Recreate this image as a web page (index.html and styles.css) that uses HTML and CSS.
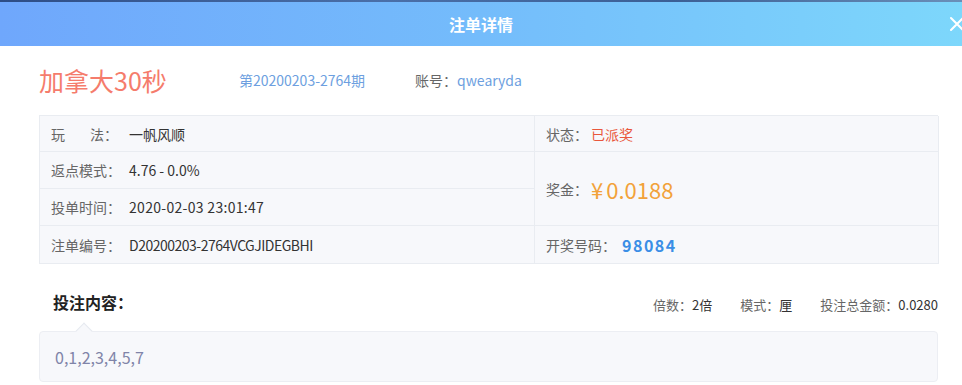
FILE: index.html
```html
<!DOCTYPE html>
<html lang="zh">
<head>
<meta charset="utf-8">
<link rel="stylesheet" href="styles.css">
</head>
<body>
<div class="modal">
  <div class="topstrip"></div>
  <header class="head">
    <span class="head-title">注单详情</span>
    <span class="close">
      <svg width="16" height="16" viewBox="0 0 16 16"><path d="M2 2 L14 14 M14 2 L2 14" stroke="#fff" stroke-width="2" fill="none" stroke-linecap="round"/></svg>
    </span>
  </header>
  <main class="body">
    <div class="title-row">
      <span class="game">加拿大30秒</span>
      <span class="issue">第20200203-2764期</span>
      <span class="acct"><span class="lbl">账号：</span><span class="acct-v">qwearyda</span></span>
    </div>
    <div class="table">
      <div class="cell c1"><span class="lbl k-wide">玩<span class="gap"></span>法：</span><span class="val">一帆风顺</span></div>
      <div class="cell c2"><span class="lbl">状态：</span><span class="status">已派奖</span></div>
      <div class="cell c3"><span class="lbl">返点模式：</span><span class="val">4.76 - 0.0%</span></div>
      <div class="cell c4"><span class="lbl">奖金：</span><span class="prize"><span class="yen">¥</span>0.0188</span></div>
      <div class="cell c5"><span class="lbl">投单时间：</span><span class="val">2020-02-03 23:01:47</span></div>
      <div class="cell c6"><span class="lbl">注单编号：</span><span class="val">D20200203-2764VCGJIDEGBHI</span></div>
      <div class="cell c7"><span class="lbl">开奖号码：</span><span class="nums">98084</span></div>
    </div>
    <div class="sec-row">
      <span class="sec-title">投注内容：</span>
      <div class="meta">
        <span><span class="lbl">倍数：</span><span class="val">2倍</span></span>
        <span><span class="lbl">模式：</span><span class="val">厘</span></span>
        <span><span class="lbl">投注总金额：</span><span class="val">0.0280</span></span>
      </div>
    </div>
    <div class="content">
      <span class="arrow"></span>
      0,1,2,3,4,5,7
    </div>
  </main>
</div>
</body>
</html>
```

FILE: styles.css
```css
* { box-sizing: border-box; }
html, body { margin: 0; padding: 0; background: #fff; }
body {
  width: 962px;
  height: 385px;
  overflow: hidden;
  font-family: "Noto Sans CJK SC", "Noto Sans", sans-serif;
  color: #333;
}
.modal { width: 962px; }
.topstrip {
  height: 2px;
  background: linear-gradient(90deg, #2d4d86 0%, #4a6fa8 40%, #3b5f95 70%, #6a8fb8 100%);
}
.head {
  height: 44px;
  background: linear-gradient(90deg, #6fa7fc 0%, #74bcfb 50%, #7dd7fb 100%);
  display: flex;
  align-items: center;
  justify-content: center;
  position: relative;
}
.head-title {
  color: #fff;
  font-size: 16px;
  font-weight: bold;
}
.close {
  position: absolute;
  right: -3px;
  top: 14px;
  width: 16px;
  height: 16px;
  display: block;
}
.close svg { display: block; }
.body { padding: 0 24px 0 39px; }
.title-row {
  height: 69px;
  display: flex;
  align-items: center;
  padding-bottom: 2px;
}
.game {
  font-size: 25px;
  color: #f57c6c;
  width: 200px;
}
.issue {
  font-size: 14px;
  color: #6d9fe0;
  width: 176px;
}
.acct { font-size: 14px; }
.lbl { color: #666; }
.acct-v { color: #6d9fe0; }
.table {
  display: grid;
  grid-template-columns: 495px 404px;
  grid-template-rows: 36px 37px 37px 38px;
  border-top: 1px solid #e9ecf1;
  border-left: 1px solid #e9ecf1;
  background: #f7f8fb;
  font-size: 14px;
}
.cell {
  display: flex;
  align-items: center;
  padding-left: 11px;
  border-right: 1px solid #e9ecf1;
  border-bottom: 1px solid #e9ecf1;
}
.c1 { grid-column: 1; grid-row: 1; }
.c2 { grid-column: 2; grid-row: 1; }
.c3 { grid-column: 1; grid-row: 2; }
.c4 { grid-column: 2; grid-row: 2 / 4; }
.c5 { grid-column: 1; grid-row: 3; }
.c6 { grid-column: 1; grid-row: 4; }
.c7 { grid-column: 2; grid-row: 4; }
.cell .lbl { width: 78px; display: inline-flex; }
.k-wide .gap { width: 25px; display: inline-block; }
.c2 .lbl, .c4 .lbl { width: 45px; }
.c7 .lbl { width: 76px; }
.val { color: #333; }
.c6 .val { letter-spacing: -0.5px; }
.c5 .val { letter-spacing: 0.3px; }
.status { color: #e9573c; }
.prize { color: #f2a23a; font-size: 22px; }
.yen { margin-right: 3px; }
.nums { color: #3a8ee6; font-weight: bold; font-size: 16px; letter-spacing: 1.5px; }
.sec-row {
  height: 67px;
  display: flex;
  align-items: center;
  justify-content: space-between;
  padding-top: 9px;
}
.sec-title {
  font-size: 16px;
  font-weight: bold;
  color: #222;
  padding-left: 14px;
}
.meta {
  display: flex;
  gap: 28px;
  font-size: 13px;
  padding-top: 4px;
}
.meta .val { color: #333; }
.content {
  position: relative;
  height: 51px;
  background: #f7f8fb;
  border: 1px solid #eceef3;
  border-radius: 4px;
  padding-left: 15px;
  display: flex;
  align-items: center;
  font-size: 16px;
  color: #8084a8;
}
.arrow {
  position: absolute;
  top: -7px;
  left: 38px;
  width: 12px;
  height: 12px;
  background: #f7f8fb;
  border-top: 1px solid #e6e9ef;
  border-left: 1px solid #e6e9ef;
  transform: rotate(45deg);
}
```
